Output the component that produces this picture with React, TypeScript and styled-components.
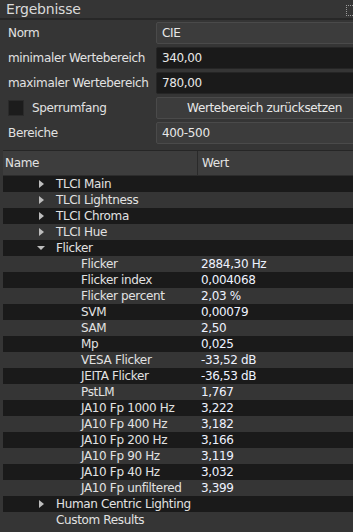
import React from "react";
import styled, { createGlobalStyle } from "styled-components";

const Global = createGlobalStyle`
  html, body { margin: 0; padding: 0; background: #353535; }
  body { font-family: "DejaVu Sans", Tahoma, sans-serif; }
`;

const Root = styled.div`
  width: 353px;
  height: 532px;
  overflow: hidden;
  background: #353535;
  color: #e2e2e2;
  display: flex;
  flex-direction: column;
  font-size: 12px;
  letter-spacing: -0.35px;
`;

const TitleBar = styled.div`
  height: 18px;
  display: flex;
  align-items: center;
  justify-content: space-between;
  padding-left: 6px;
  font-size: 14px;
  letter-spacing: -0.2px;
  color: #dadada;
  border-bottom: 2px solid #272727;
  flex: none;
`;

const FloatIcon = styled.div`
  width: 6px;
  height: 9px;
  margin-top: 2px;
  border: 1px dotted #9a9a9a;
  border-right: none;
`;

const Form = styled.div`
  display: grid;
  grid-template-columns: 140px 220px;
  column-gap: 8px;
  row-gap: 3px;
  padding: 2px 0 0 8px;
  align-items: center;
`;

const Label = styled.div`
  height: 22px;
  display: flex;
  align-items: center;
  gap: 8px;
  white-space: nowrap;
`;

const Box = styled.div<{ $kind: "combo" | "input" | "button" }>`
  height: 22px;
  box-sizing: border-box;
  display: flex;
  align-items: center;
  padding-left: 5px;
  justify-content: ${(p) => (p.$kind === "button" ? "center" : "flex-start")};
  padding-right: ${(p) => (p.$kind === "button" ? "8px" : "0")};
  background: ${(p) => (p.$kind === "input" ? "#1a1a1a" : "#3c3c3c")};
  border: 1px solid ${(p) => (p.$kind === "input" ? "#252525" : "#4a4a4a")};
  border-radius: 2px;
  color: #e8e8e8;
`;

const Check = styled.div`
  width: 16px;
  height: 16px;
  box-sizing: border-box;
  background: #1c1c1c;
  border: 1px solid #2a2a2a;
  flex: none;
`;

const Tree = styled.div`
  margin-top: 6px;
  margin-left: 3px;
  flex: 1;
  display: flex;
  flex-direction: column;
  border-top: 1px solid #262626;
`;

const Header = styled.div`
  height: 24px;
  flex: none;
  display: grid;
  grid-template-columns: 194px 1fr;
  background: #3d3d3d;
  border-bottom: 1px solid #2c2c2c;
`;

const HeadCell = styled.div<{ $divider?: boolean }>`
  display: flex;
  align-items: center;
  padding-left: ${(p) => (p.$divider ? "4px" : "2px")};
  border-left: ${(p) => (p.$divider ? "1px solid #2a2a2a" : "none")};
`;

const Row = styled.div<{ $alt: boolean }>`
  height: 16px;
  flex: none;
  display: grid;
  grid-template-columns: 198px 1fr;
  align-items: center;
  background: ${(p) => (p.$alt ? "#353535" : "#1a1a1a")};
  white-space: nowrap;
`;

const NameCell = styled.div<{ $child: boolean }>`
  display: flex;
  align-items: center;
  padding-left: ${(p) => (p.$child ? 78 : 33)}px;
  overflow: hidden;
`;

const Arrow = styled.span`
  width: 20px;
  display: inline-flex;
  align-items: center;
  flex: none;
`;

const ValueCell = styled.div`
  color: #eef2ff;
`;

type Item = { name: string; value?: string; level: number; arrow?: "right" | "down" | "none" };

const items: Item[] = [
  { name: "TLCI Main", level: 0, arrow: "right" },
  { name: "TLCI Lightness", level: 0, arrow: "right" },
  { name: "TLCI Chroma", level: 0, arrow: "right" },
  { name: "TLCI Hue", level: 0, arrow: "right" },
  { name: "Flicker", level: 0, arrow: "down" },
  { name: "Flicker", value: "2884,30 Hz", level: 1 },
  { name: "Flicker index", value: "0,004068", level: 1 },
  { name: "Flicker percent", value: "2,03 %", level: 1 },
  { name: "SVM", value: "0,00079", level: 1 },
  { name: "SAM", value: "2,50", level: 1 },
  { name: "Mp", value: "0,025", level: 1 },
  { name: "VESA Flicker", value: "-33,52 dB", level: 1 },
  { name: "JEITA Flicker", value: "-36,53 dB", level: 1 },
  { name: "PstLM", value: "1,767", level: 1 },
  { name: "JA10 Fp 1000 Hz", value: "3,222", level: 1 },
  { name: "JA10 Fp 400 Hz", value: "3,182", level: 1 },
  { name: "JA10 Fp 200 Hz", value: "3,166", level: 1 },
  { name: "JA10 Fp 90 Hz", value: "3,119", level: 1 },
  { name: "JA10 Fp 40 Hz", value: "3,032", level: 1 },
  { name: "JA10 Fp unfiltered", value: "3,399", level: 1 },
  { name: "Human Centric Lighting", level: 0, arrow: "right" },
  { name: "Custom Results", level: 0, arrow: "none" },
];

function Tri({ dir }: { dir: "right" | "down" | "none" }) {
  if (dir === "none") return <Arrow />;
  return (
    <Arrow>
      <svg width="10" height="10" viewBox="0 0 10 10">
        {dir === "right" ? (
          <polygon points="3,1 8,5 3,9" fill="#bdbdbd" />
        ) : (
          <polygon points="1,3 9,3 5,7" fill="#bdbdbd" />
        )}
      </svg>
    </Arrow>
  );
}

export default function App() {
  return (
    <Root>
      <Global />
      <TitleBar>
        <span>Ergebnisse</span>
        <FloatIcon />
      </TitleBar>
      <Form>
        <Label>Norm</Label>
        <Box $kind="combo">CIE</Box>
        <Label>minimaler Wertebereich</Label>
        <Box $kind="input">340,00</Box>
        <Label>maximaler Wertebereich</Label>
        <Box $kind="input">780,00</Box>
        <Label>
          <Check />
          Sperrumfang
        </Label>
        <Box $kind="button">Wertebereich zurücksetzen</Box>
        <Label>Bereiche</Label>
        <Box $kind="combo">400-500</Box>
      </Form>
      <Tree>
        <Header>
          <HeadCell>Name</HeadCell>
          <HeadCell $divider>Wert</HeadCell>
        </Header>
        {items.map((it, i) => (
          <Row key={i} $alt={i % 2 === 1}>
            <NameCell $child={it.level === 1}>
              {it.level === 0 && <Tri dir={it.arrow ?? "none"} />}
              {it.name}
            </NameCell>
            <ValueCell>{it.value ?? ""}</ValueCell>
          </Row>
        ))}
      </Tree>
    </Root>
  );
}
